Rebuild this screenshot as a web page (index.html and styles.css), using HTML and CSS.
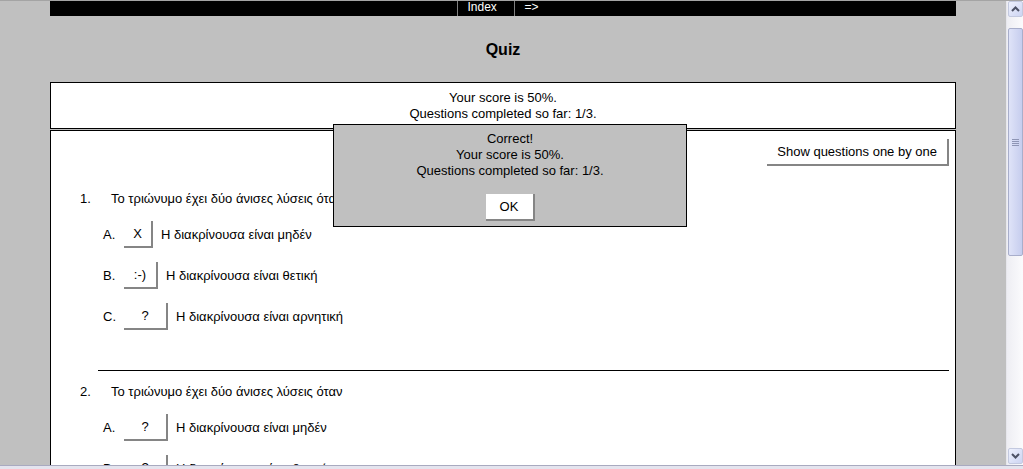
FILE: index.html
```html
<!DOCTYPE html>
<html lang="el">
<head>
<meta charset="utf-8">
<title>Quiz</title>
<link rel="stylesheet" href="styles.css">
</head>
<body>
<div class="window">
  <div class="topline"></div>
  <div class="viewport">
    <div class="page">
      <div class="container">
        <div class="navbar">
          <span class="nav-item nav-index">Index</span>
          <span class="nav-item nav-next">=&gt;</span>
        </div>
        <h2 class="title">Quiz</h2>
        <div class="score-box">
          <div>Your score is 50%.</div>
          <div>Questions completed so far: 1/3.</div>
        </div>
        <div class="main-box">
          <div class="toolbar">
            <button class="btn btn-show">Show questions one by one</button>
          </div>
          <div class="question question-first">
            <div class="q-line"><span class="q-num">1.</span><span class="q-text">Το τριώνυμο έχει δύο άνισες λύσεις όταν</span></div>
            <div class="option"><span class="opt-letter">A.</span><button class="btn btn-opt btn-x">X</button><span class="opt-text">Η διακρίνουσα είναι μηδέν</span></div>
            <div class="option"><span class="opt-letter">B.</span><button class="btn btn-opt btn-smile">:-)</button><span class="opt-text">Η διακρίνουσα είναι θετική</span></div>
            <div class="option"><span class="opt-letter">C.</span><button class="btn btn-opt btn-q">?</button><span class="opt-text">Η διακρίνουσα είναι αρνητική</span></div>
          </div>
          <div class="separator"></div>
          <div class="question">
            <div class="q-line"><span class="q-num">2.</span><span class="q-text">Το τριώνυμο έχει δύο άνισες λύσεις όταν</span></div>
            <div class="option"><span class="opt-letter">A.</span><button class="btn btn-opt btn-q">?</button><span class="opt-text">Η διακρίνουσα είναι μηδέν</span></div>
            <div class="option"><span class="opt-letter">B.</span><button class="btn btn-opt btn-q">?</button><span class="opt-text">Η διακρίνουσα είναι θετική</span></div>
            <div class="option"><span class="opt-letter">C.</span><button class="btn btn-opt btn-q">?</button><span class="opt-text">Η διακρίνουσα είναι αρνητική</span></div>
          </div>
        </div>
      </div>
      <div class="dialog">
        <div>Correct!</div>
        <div>Your score is 50%.</div>
        <div>Questions completed so far: 1/3.</div>
        <button class="btn btn-ok">OK</button>
      </div>
    </div>
    <div class="vscroll">
      <div class="sb-btn sb-up">
        <svg width="9" height="6" viewBox="0 0 9 6"><polyline points="1,5 4.5,1.5 8,5" fill="none" stroke="#4d5266" stroke-width="2"/></svg>
      </div>
      <div class="sb-track">
        <div class="sb-thumb">
          <div class="grip"><span></span><span></span><span></span><span></span></div>
        </div>
      </div>
      <div class="sb-btn sb-down">
        <svg width="9" height="6" viewBox="0 0 9 6"><polyline points="1,1 4.5,4.5 8,1" fill="none" stroke="#4d5266" stroke-width="2"/></svg>
      </div>
    </div>
  </div>
  <div class="bottomline"></div>
</div>
</body>
</html>
```

FILE: styles.css
```css
* { box-sizing: border-box; }
html, body { margin: 0; padding: 0; }
body {
  font-family: "Liberation Sans", Arial, sans-serif;
  font-size: 13px;
  color: #000;
  overflow: hidden;
  background: #c0c0c0;
}
.window {
  width: 1023px;
  height: 469px;
  display: flex;
  flex-direction: column;
  overflow: hidden;
}
.topline { height: 1px; background: #a4a4a4; flex: none; }
.viewport { flex: 1; display: flex; min-height: 0; }
.page {
  width: 1006px;
  flex: none;
  position: relative;
  overflow: hidden;
  background: #c0c0c0;
}
.container { margin: 0 50px; }

.navbar {
  height: 15px;
  background: #000;
  display: flex;
  justify-content: center;
  color: #fff;
  font-size: 12px;
  line-height: 12px;
}
.nav-item { border-left: 1px solid #808080; padding-left: 10px; }
.nav-index { width: 57px; }
.nav-next { width: 36px; }

.title {
  margin: 25px 0 23px;
  font-size: 16px;
  line-height: 18px;
  font-weight: bold;
  text-align: center;
}

.score-box {
  background: #fff;
  border: 1px solid #000;
  text-align: center;
  line-height: 16px;
  padding: 7px 0 6px;
}
.main-box {
  margin-top: 1px;
  background: #fff;
  border: 1px solid #000;
  padding: 8px 6px 40px 8px;
}
.toolbar { display: flex; justify-content: flex-end; }

.btn {
  font-family: inherit;
  font-size: inherit;
  color: #000;
  background: #fff;
  border: 0;
  border-right: 2px solid #858585;
  border-bottom: 2px solid #858585;
  height: 27px;
  padding: 0;
  margin: 0;
}
.btn-show { padding: 0 10px; }

.question { padding-left: 21px; }
.question-first { margin-top: 25px; }
.q-line { display: flex; line-height: 16px; }
.q-num { width: 31px; }
.option {
  display: flex;
  align-items: center;
  margin-top: 14px;
  padding-left: 23px;
  line-height: 16px;
}
.opt-letter { width: 21px; }
.btn-opt { margin-right: 8px; text-align: center; }
.btn-x { width: 29px; }
.btn-smile { width: 34px; }
.btn-q { width: 44px; }

.separator {
  margin: 40px 0 13px 39px;
  border-top: 1px solid #000;
}

.dialog {
  position: absolute;
  left: 333px;
  top: 123px;
  width: 354px;
  height: 103px;
  background: #c0c0c0;
  border: 1px solid #000;
  text-align: center;
  line-height: 16px;
  padding-top: 6px;
  display: flex;
  flex-direction: column;
  align-items: center;
}
.btn-ok { width: 49px; margin-top: 15px; }

.vscroll {
  width: 17px;
  flex: none;
  display: flex;
  flex-direction: column;
  background: linear-gradient(to right, #eeeef3, #fbfbfd);
  border-left: 1px solid #e6e6ec;
  padding: 0 0 1px 1px;
}
.sb-btn {
  height: 16px;
  flex: none;
  border: 1px solid #c3c9df;
  border-radius: 2px;
  background: linear-gradient(to bottom right, #eef1fd, #cdd4f2);
  display: flex;
  align-items: center;
  justify-content: center;
}
.sb-track { flex: 1; padding-top: 11px; padding-bottom: 192px; display: flex; }
.sb-thumb {
  flex: 1;
  border: 1px solid #a8aecb;
  border-radius: 2px;
  background: linear-gradient(to right, #dfe3f8, #c6cdee);
  display: flex;
  align-items: center;
  justify-content: center;
}
.grip { display: flex; flex-direction: column; gap: 1px; }
.grip span { display: block; width: 7px; height: 1px; background: #8e95b5; }

.bottomline {
  height: 4px;
  flex: none;
  border-top: 1px solid #a9aac0;
  background: #e4e4ee;
}
```
